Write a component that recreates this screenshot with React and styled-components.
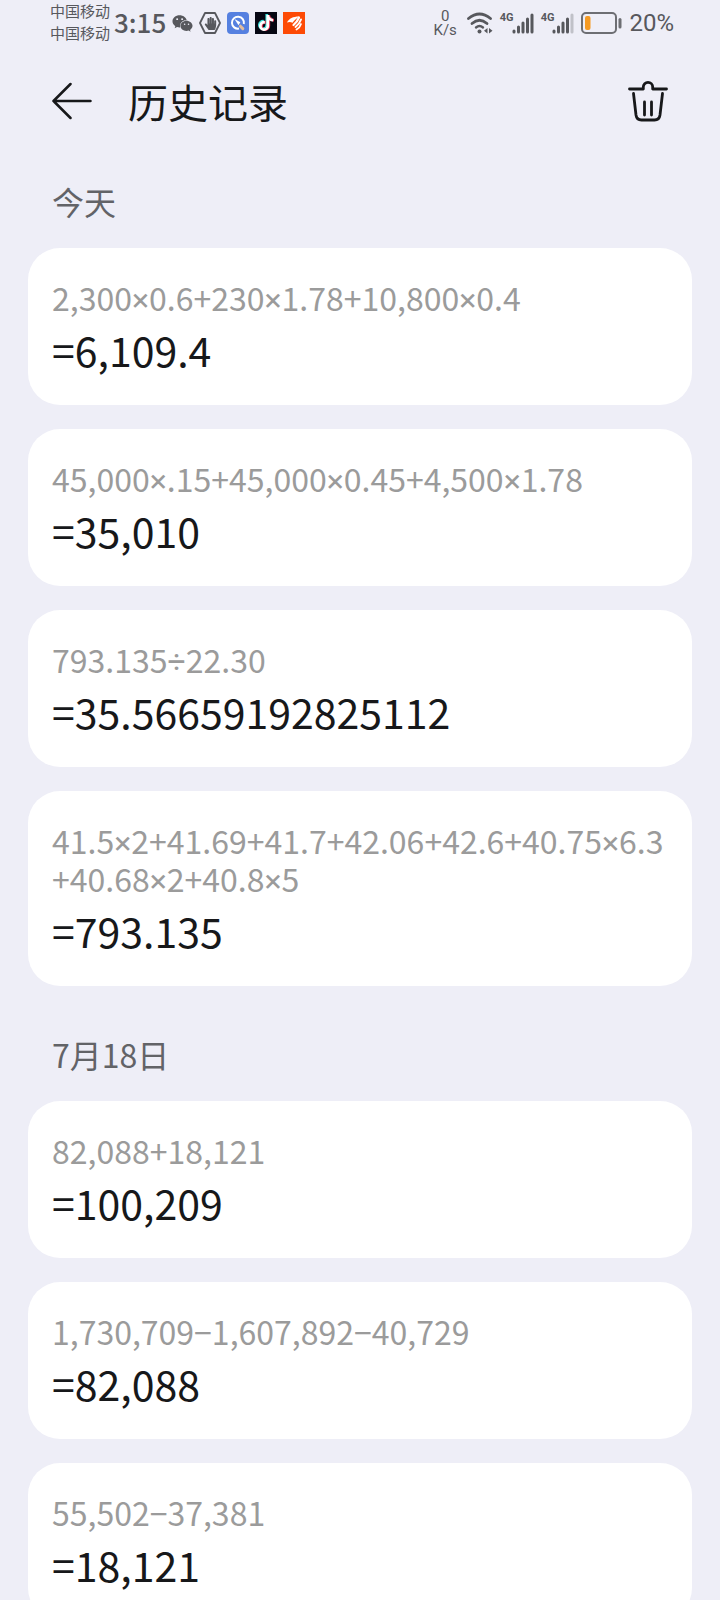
import * as React from "react"
import styled, { createGlobalStyle } from "styled-components";
import { FaWeixin, FaTiktok, FaHandPaper } from "react-icons/fa";

const GlobalStyle = createGlobalStyle`
  * {
    box-sizing: border-box;
  }
  body {
    margin: 0;
    background: #eeeef7;
    font-family: "Noto Sans CJK SC", "Noto Sans", sans-serif;
  }
`
const Page = styled.div`
  display: flex;
  flex-direction: column;
  height: 100vh;
  overflow: hidden;
  background: #eeeef7;
`
const StatusBar = styled.div`
  display: flex;
  flex: none;
  align-items: center;
  justify-content: space-between;
  height: 46px;
  padding: 0 46px 0 50px;
  color: #57585d;
`
const StatusGroup = styled.div`
  display: flex;
  align-items: center;
  gap: ${props => props.$gap}px;
`
const Carriers = styled.div`
  padding-bottom: 2px;
  font-size: 15px;
  line-height: 22px;
`
const Time = styled.time`
  margin-left: -2px;
  padding-bottom: 2px;
  font-size: 26px;
  line-height: 44px;
  font-weight: 500;
`
const AppBadge = styled.span`
  display: flex;
  align-items: center;
  justify-content: center;
  width: 22px;
  height: 22px;
  border-radius: ${props => props.$radius || 0}px;
  background: ${props => props.$color};
`
const IconStack = styled.span`
  display: grid;
  place-items: center;

  > svg {
    grid-area: 1 / 1;
  }
`
const Speed = styled.div`
  margin-right: 3px;
  font-family: Roboto, sans-serif;
  font-size: 15px;
  line-height: 14px;
  text-align: center;
`
const Signal = styled.div`
  display: flex;
  align-items: flex-start;
`
const Network = styled.span`
  margin-right: -2px;
  font-family: Roboto, sans-serif;
  font-size: 11px;
  font-weight: 700;
  line-height: 10px;
`
const Percent = styled.span`
  font-family: Roboto, sans-serif;
  font-size: 24px;
  line-height: 46px;
`
const Header = styled.header`
  display: flex;
  flex: none;
  align-items: center;
  margin-top: 23px;
  height: 64px;
  padding: 0 52px;
`
const IconButton = styled.button`
  display: flex;
  padding: 0;
  border: 0;
  background: none;
  color: #17181a;
  cursor: pointer;
`
const Title = styled.h1`
  flex: 1;
  margin: 0;
  padding-left: 36px;
  color: #17181a;
  font-size: 40px;
  font-weight: 400;
  line-height: 62px;
`
const History = styled.main`
  flex: 1;
  min-height: 0;
  padding: 0 28px;
  overflow-y: auto;
  scrollbar-width: none;
`
const Day = styled.h2`
  margin: 48px 24px 27px;
  color: #626367;
  font-size: 32px;
  font-weight: 400;
  line-height: 40px;
`
const List = styled.ul`
  display: flex;
  flex-direction: column;
  gap: 24px;
  margin: 0;
  padding: 0;
  list-style: none;
`
const Card = styled.li`
  display: flex;
  flex-direction: column;
  gap: 5px;
  padding: 30px 24px 28px;
  border-radius: 32px;
  background: #fff;
`
const Expression = styled.div`
  color: #9b9b9b;
  font-size: 32px;
  line-height: 38px;
  word-break: break-all;
`
// the CJK face draws × and ÷ full width
const Operator = styled.span`
  font-family: Roboto, sans-serif;
  line-height: 1;
`
const Result = styled.div`
  color: #17181a;
  font-size: 41px;
  line-height: 56px;
`

const days = [
  {
    name: "今天",
    records: [
      ["2,300×0.6+230×1.78+10,800×0.4", "6,109.4"],
      ["45,000×.15+45,000×0.45+4,500×1.78", "35,010"],
      ["793.135÷22.30", "35.56659192825112"],
      ["41.5×2+41.69+41.7+42.06+42.6+40.75×6.3+40.68×2+40.8×5", "793.135"],
    ],
  },
  {
    name: "7月18日",
    records: [
      ["82,088+18,121", "100,209"],
      ["1,730,709−1,607,892−40,729", "82,088"],
      ["55,502−37,381", "18,121"],
    ],
  },
]

const withOperators = text =>
  text
    .split(/(?=[+×÷])|(?<=[×÷])/)
    .map((part, i) => (/[×÷]/.test(part) ? <Operator key={i}>{part}</Operator> : part))

const BrowserIcon = () => (
  <svg width="16" height="16" viewBox="0 0 16 16" fill="none">
    <path d="M9 13.6A6 6 0 1 1 13.8 9" stroke="#fff" strokeWidth="2" />
    <path d="M4.5 4l5.8 3.2-1.8 3z" fill="#fff" />
    <path d="M10.4 11.2l2.4 2.4" stroke="#e3bd9b" strokeWidth="3" strokeLinecap="round" />
  </svg>
)

const WingIcon = () => (
  <svg width="18" height="18" viewBox="0 0 18 18" fill="none" stroke="#fff" strokeLinecap="round">
    <path d="M2 8.500C4 4.500 8 2.500 14 2.500C11 5 9 6.500 7.500 8.800C6 7.800 4 7.500 2 8.500z" fill="#fff" stroke="none" />
    <path d="M14 3.500Q12.500 7.500 8.500 11" strokeWidth="2.200" />
    <path d="M16 5.500Q14.500 10 10.500 13" strokeWidth="2" />
    <path d="M16 10Q15 13.500 11.500 15.500" strokeWidth="1.800" />
  </svg>
)

const TiktokIcon = () => (
  <svg width="18" height="18" viewBox="0 0 18 18">
    <FaTiktok x="0" y="0" size={16} color="#3fe0dc" />
    <FaTiktok x="2" y="1" size={16} color="#f0385b" />
    <FaTiktok x="1" y="1" size={16} color="#fff" />
  </svg>
)

const WifiIcon = () => (
  <svg width="26" height="22" viewBox="0 0 26 22" fill="none" stroke="currentColor">
    <path d="M1.500 6.500Q12.500-2.500 23.500 6.500" strokeWidth="2.800" strokeLinecap="round" />
    <path d="M5 11.500Q12.500 5 20 11.500" strokeWidth="2.800" strokeLinecap="round" />
    <path d="M9 15.500Q12.500 12.500 16 15.500" strokeWidth="2.400" strokeLinecap="round" />
    <circle cx="12.500" cy="19.500" r="2" fill="currentColor" stroke="none" />
    <path d="M20.500 16v5.500l-3.500-2.750zM22 16v5.500l3.500-2.750z" fill="currentColor" stroke="none" />
  </svg>
)

const SignalIcon = ({ level }) => (
  <svg width="22" height="21" viewBox="0 0 22 21">
    {[4, 8, 12, 16, 20].map((height, i) => (
      <rect
        key={height}
        x={0.5 + i * 4.5}
        y={20.5 - height}
        width="3"
        height={height}
        rx="1.500"
        fill="currentColor"
        opacity={i < level ? 1 : 0.3}
      />
    ))}
  </svg>
)

const BatteryIcon = () => (
  <svg width="41" height="22" viewBox="0 0 41 22" fill="none">
    <rect x="1" y="1" width="34" height="20" rx="4" stroke="#6d6e73" strokeWidth="2" />
    <rect x="4" y="4" width="5.500" height="14" rx="2" fill="#f59a23" />
    <rect x="37.500" y="6" width="3" height="10.500" rx="1.500" fill="#6d6e73" />
  </svg>
)

const BackIcon = () => (
  <svg width="40" height="38" viewBox="0 0 40 38" fill="none" stroke="currentColor" strokeWidth="2.500" strokeLinecap="round" strokeLinejoin="round">
    <path d="M18.500 2L1.500 19l17 17M1.500 19H38.500" />
  </svg>
)

const TrashIcon = () => (
  <svg width="40" height="42" viewBox="0 0 40 42" fill="none" stroke="currentColor" strokeWidth="2.800" strokeLinecap="round">
    <path d="M1.500 9H15.300V7a4.700 4.700 0 0 1 9.400 0v2H38.500" strokeLinejoin="round" />
    <path d="M5.500 13.500L8 35Q8.700 40 13.500 40h13Q31.300 40 32 35L34.500 13.500" />
    <path d="M16.500 22v13M23.500 22v13" />
  </svg>
)

const App = () => (
  <Page>
    <GlobalStyle />
    <StatusBar>
      <StatusGroup $gap={6}>
        <Carriers>
          <div>中国移动</div>
          <div>中国移动</div>
        </Carriers>
        <Time>3:15</Time>
        <FaWeixin size={21} />
        <IconStack>
          <svg width="22" height="22" viewBox="0 0 22 22" fill="none" stroke="currentColor" strokeWidth="1.800" strokeLinejoin="round">
            <path d="M6 1h10l5 10-5 10H6L1 11z" />
          </svg>
          <FaHandPaper size={13} />
        </IconStack>
        <AppBadge $color="#5580e0" $radius={4}><BrowserIcon /></AppBadge>
        <AppBadge $color="#060713"><TiktokIcon /></AppBadge>
        <AppBadge $color="#fd4a05"><WingIcon /></AppBadge>
      </StatusGroup>
      <StatusGroup $gap={7}>
        <Speed>
          0<br />K/s
        </Speed>
        <WifiIcon />
        <Signal>
          <Network>4G</Network>
          <SignalIcon level={5} />
        </Signal>
        <Signal>
          <Network>4G</Network>
          <SignalIcon level={4} />
        </Signal>
        <BatteryIcon />
        <Percent>20%</Percent>
      </StatusGroup>
    </StatusBar>
    <Header>
      <IconButton aria-label="返回"><BackIcon /></IconButton>
      <Title>历史记录</Title>
      <IconButton aria-label="清空"><TrashIcon /></IconButton>
    </Header>
    <History>
      {days.map(day => (
        <section key={day.name}>
          <Day>{day.name}</Day>
          <List>
            {day.records.map(([expression, result]) => (
              <Card key={expression}>
                <Expression>{withOperators(expression)}</Expression>
                <Result>={result}</Result>
              </Card>
            ))}
          </List>
        </section>
      ))}
    </History>
  </Page>
)

export default App
